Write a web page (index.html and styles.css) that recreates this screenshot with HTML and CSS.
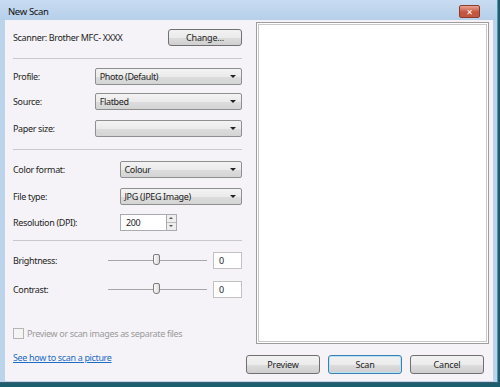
FILE: index.html
```html
<!DOCTYPE html>
<html lang="en">
<head>
    <meta charset="UTF-8">
    <title>New Scan</title>
    <link rel="stylesheet" href="styles.css">
</head>
<body>
    <div class="window">
        <div class="titlebar">
            <span class="title">New Scan</span>
            <span class="close">&#x2715;</span>
        </div>
        <div class="panel">
            <div class="left">
                <div class="row scanner-row">
                    <span>Scanner: Brother MFC- XXXX</span>
                    <button class="btn change">Change...</button>
                </div>
                <hr class="sep">
                <div class="row r1">
                    <label>Profile:</label>
                    <div class="select wide">Photo (Default)</div>
                </div>
                <div class="row r2">
                    <label>Source:</label>
                    <div class="select wide">Flatbed</div>
                </div>
                <div class="row r3">
                    <label>Paper size:</label>
                    <div class="select wide"></div>
                </div>
                <hr class="sep sep2">
                <div class="row r4">
                    <label>Color format:</label>
                    <div class="select narrow">Colour</div>
                </div>
                <div class="row r5">
                    <label>File type:</label>
                    <div class="select narrow">JPG (JPEG Image)</div>
                </div>
                <div class="row r6">
                    <label>Resolution (DPI):</label>
                    <div class="spin">
                        <div class="spin-text">200</div>
                        <div class="spin-btns">
                            <span class="up"></span>
                            <span class="down"></span>
                        </div>
                    </div>
                </div>
                <hr class="sep sep3">
                <div class="row r7">
                    <label>Brightness:</label>
                    <div class="slider"><span class="thumb"></span></div>
                    <div class="num">0</div>
                </div>
                <div class="row r8">
                    <label>Contrast:</label>
                    <div class="slider"><span class="thumb"></span></div>
                    <div class="num">0</div>
                </div>
                <div class="check-row">
                    <span class="checkbox"></span>
                    <span>Preview or scan images as separate files</span>
                </div>
                <a class="link" href="#">See how to scan a picture</a>
            </div>
            <div class="right">
                <div class="preview"><div class="preview-inner"></div></div>
                <div class="buttons">
                    <button class="btn big">Preview</button>
                    <button class="btn big focus">Scan</button>
                    <button class="btn big">Cancel</button>
                </div>
            </div>
        </div>
    </div>
</body>
</html>
```

FILE: styles.css
```css
body {
    margin: 0;
    padding: 0;
    background-color: #1b5e6e;
    font-family: "Noto Sans", "DejaVu Sans", sans-serif;
    font-size: 9px;
    letter-spacing: -0.35px;
    color: #1e1e1e;
}

.window {
    width: 497px;
    height: 382px;
    background-color: #bcd3ec;
    border-right: 1px solid #5f8fb1;
    border-bottom: 1px solid #3b5c72;
    display: flex;
    flex-direction: column;
}

.titlebar {
    height: 20px;
    display: flex;
    align-items: center;
    justify-content: space-between;
    padding: 0 17px 0 8px;
    background: linear-gradient(#c8dcf1, #b6cfea);
}

.title {
    font-size: 9.5px;
    color: #111;
    margin-top: 2px;
}

.close {
    width: 19px;
    height: 11px;
    margin-top: 2px;
    border: 1px solid #8d3a2c;
    border-radius: 2px;
    background: linear-gradient(#e8a493, #c6553f 55%, #c0573f);
    color: #fff;
    font-size: 8px;
    font-weight: bold;
    line-height: 11px;
    text-align: center;
    letter-spacing: 0;
}

.panel {
    flex: 1;
    margin: 0 4px 1px 5px;
    background-color: #f5f3f7;
    display: flex;
}

.left {
    width: 229px;
    padding-left: 8px;
    display: flex;
    flex-direction: column;
}

.row {
    display: flex;
    align-items: center;
    height: 17px;
}

.row label {
    width: 82px;
}

.scanner-row {
    margin-top: 9px;
    justify-content: space-between;
}

.sep {
    border: none;
    border-top: 1px solid #c9c8cc;
    margin: 12px 0 0 0;
    width: 229px;
}

.r1 { margin-top: 9px; }
.r2 { margin-top: 8px; }
.r3 { margin-top: 10px; }
.sep2 { margin-top: 12px; }
.r4 { margin-top: 11px; }
.r4 label, .r5 label, .r6 label { width: 107px; }
.r5 { margin-top: 10px; }
.r6 { margin-top: 9px; }
.sep3 { margin-top: 9px; }
.r7 { margin-top: 11px; }
.r8 { margin-top: 12px; }
.r7 label, .r8 label { width: 95px; }

.btn {
    font-family: inherit;
    font-size: 9px;
    letter-spacing: -0.2px;
    color: #1e1e1e;
    border: 1px solid #707070;
    border-radius: 3px;
    background: linear-gradient(#f2f2f2 0%, #ebebeb 50%, #dddddd 51%, #cfcfcf 100%);
    padding: 0;
}

.change {
    width: 74px;
    height: 17px;
}

.select {
    height: 15px;
    border: 1px solid #8e8f8f;
    border-radius: 2px;
    background: linear-gradient(#f3f3f3 0%, #ebebeb 50%, #dddddd 51%, #d4d4d4 100%);
    padding-left: 4px;
    line-height: 15px;
    position: relative;
    box-sizing: content-box;
}

.select::after {
    content: "";
    position: absolute;
    right: 5px;
    top: 6px;
    border-left: 3px solid transparent;
    border-right: 3px solid transparent;
    border-top: 3px solid #222;
}

.wide { width: 142px; }
.narrow { width: 117px; }

.spin {
    display: flex;
    height: 17px;
}

.spin-text {
    width: 40px;
    height: 15px;
    border: 1px solid #a9abae;
    border-right: none;
    background-color: #fff;
    padding-left: 5px;
    line-height: 15px;
}

.spin-btns {
    width: 9px;
    display: flex;
    flex-direction: column;
    border: 1px solid #a9abae;
    background-color: #eeeeee;
}

.spin-btns span {
    flex: 1;
    position: relative;
}

.spin-btns .up {
    border-bottom: 1px solid #bbbbbb;
}

.spin-btns .up::after,
.spin-btns .down::after {
    content: "";
    position: absolute;
    left: 2px;
    top: 2px;
    border-left: 2px solid transparent;
    border-right: 2px solid transparent;
}

.spin-btns .up::after { border-bottom: 2px solid #555; }
.spin-btns .down::after { border-top: 2px solid #555; }

.slider {
    width: 100px;
    height: 1px;
    background-color: #a6a6a6;
    position: relative;
    margin-right: 6px;
}

.thumb {
    position: absolute;
    left: 45px;
    top: -6px;
    width: 7px;
    height: 11px;
    border: 1px solid #7c7c7c;
    border-radius: 2px 2px 3px 3px;
    background: linear-gradient(90deg, #fafafa, #dcdcdc);
    box-sizing: border-box;
}

.num {
    width: 22px;
    height: 15px;
    border: 1px solid #c2c2c2;
    background-color: #fff;
    padding-left: 5px;
    line-height: 15px;
}

.check-row {
    display: flex;
    align-items: center;
    gap: 3px;
    margin-top: 29px;
    color: #9a9a9a;
}

.checkbox {
    width: 9px;
    height: 9px;
    border: 1px solid #b5b5b5;
    background-color: #f4f4f4;
}

.link {
    margin-top: 11px;
    color: #1e6bc8;
    text-decoration: underline;
}

.right {
    flex: 1;
    padding-left: 14px;
    display: flex;
    flex-direction: column;
}

.preview {
    margin-top: 2px;
    width: 229px;
    height: 318px;
    border: 1px solid #9d9d9d;
    padding: 1px;
    background-color: #fff;
}

.preview-inner {
    height: 100%;
    border: 1px solid #c8c8c8;
    box-sizing: border-box;
}

.buttons {
    display: flex;
    gap: 8px;
    margin-top: 11px;
    margin-left: -10px;
}

.big {
    width: 74px;
    height: 19px;
}

.focus {
    border-color: #3c7fb1;
    box-shadow: inset 0 0 0 1px #b6e3f8;
}
```
